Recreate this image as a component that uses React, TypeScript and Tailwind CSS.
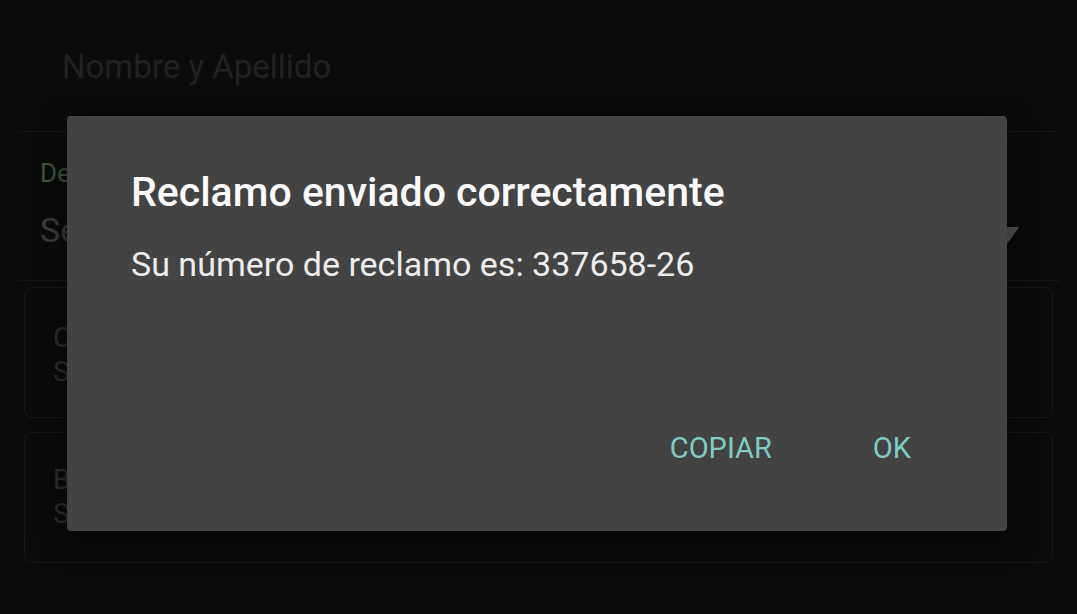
import React from "react";

const font = { fontFamily: "Roboto, 'Noto Sans', sans-serif" };

function FormBackground() {
  return (
    <div className="flex flex-col pt-[40px]">
      <div className="mx-[18px] border-b border-[#171717] pl-[44px] pb-[37px]">
        <div className="text-[33px] leading-[54px] text-[#212121]">Nombre y Apellido</div>
      </div>

      <div className="mx-[18px] border-b border-[#171717] pl-[22px] pt-[26px] pb-[30px]">
        <div className="text-[26px] leading-[30px] text-[#3e5638]">Departamento</div>
        <div className="mt-[22px] flex items-center justify-between pr-[40px]">
          <span className="text-[34px] leading-[40px] text-[#3b3b3b]">Seleccione un departamento</span>
          <svg width="24" height="17" viewBox="0 0 24 17" className="mt-[10px]">
            <path d="M0 0 H24 L12 17 Z" fill="#575757" />
          </svg>
        </div>
      </div>

      <div className="mx-[24px] mt-[6px] flex flex-col gap-[14px]">
        <div className="h-[131px] rounded-[8px] border border-[#181818] pl-[28px] pt-[33px]">
          <div className="text-[28px] leading-[34px] text-[#2e2e2e]">Calle y número</div>
          <div className="text-[28px] leading-[34px] text-[#2e2e2e]">Sin especificar</div>
        </div>
        <div className="h-[131px] rounded-[8px] border border-[#181818] pl-[28px] pt-[30px]">
          <div className="text-[28px] leading-[34px] text-[#2e2e2e]">Barrio</div>
          <div className="text-[28px] leading-[34px] text-[#2e2e2e]">Sin especificar, ubicación</div>
        </div>
      </div>
    </div>
  );
}

function SuccessDialog() {
  return (
    <div className="absolute left-[67px] top-[116px] flex h-[415px] w-[940px] flex-col rounded-[4px] bg-[#434343] shadow-[0_10px_30px_rgba(0,0,0,0.6)]">
      <div className="pl-[64px] pt-[52px]">
        <h2 className="text-[41px] font-medium leading-[49px] text-[#fafafa]">
          Reclamo enviado correctamente
        </h2>
        <p className="mt-[27px] text-[34px] leading-[41px] text-[#ececec]">
          Su número de reclamo es: 337658-26
        </p>
      </div>
      <div className="mt-auto flex justify-end gap-[101px] pb-[66px] pr-[96px]">
        <button className="text-[29px] leading-[34px] text-[#80cbc4]">COPIAR</button>
        <button className="text-[29px] leading-[34px] text-[#80cbc4]">OK</button>
      </div>
    </div>
  );
}

export default function App() {
  return (
    <div className="relative h-[614px] w-full overflow-hidden bg-[#0b0b0b]" style={font}>
      <FormBackground />
      <SuccessDialog />
    </div>
  );
}
